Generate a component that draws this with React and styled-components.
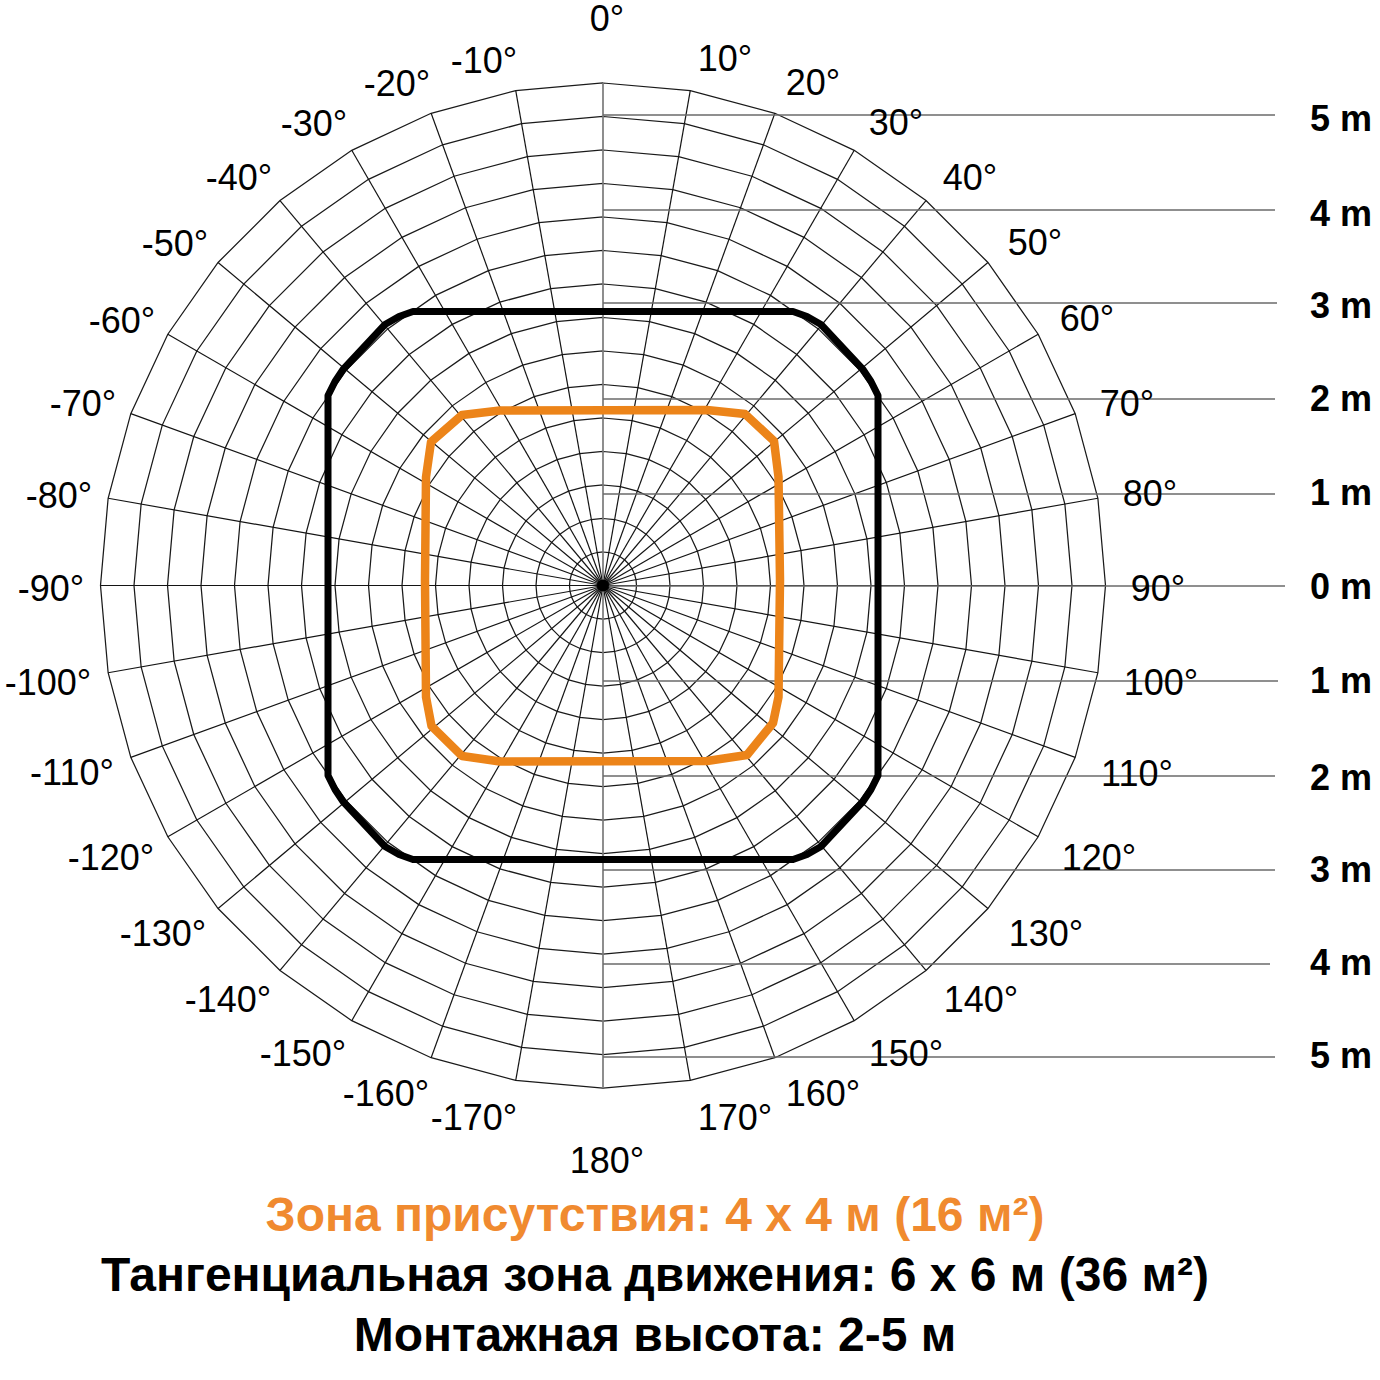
import React from 'react';
import styled, { createGlobalStyle } from 'styled-components';

const GlobalStyle = createGlobalStyle`
  html, body { margin: 0; padding: 0; background: #ffffff; }
  body { font-family: "Liberation Sans", Arial, Helvetica, sans-serif; }
`;

const Page = styled.div`
  width: 1380px;
  display: flex;
  flex-direction: column;
  background: #ffffff;
`;

const Chart = styled.svg`
  display: block;
  width: 1380px;
  height: 1185px;
`;

const DegreeLabel = styled.text`
  font-family: "Liberation Sans", Arial, Helvetica, sans-serif;
  font-size: 36px;
  fill: #000;
`;

const MeterLabel = styled.text`
  font-family: "Liberation Sans", Arial, Helvetica, sans-serif;
  font-size: 36px;
  font-weight: 700;
  fill: #000;
`;

const Caption = styled.div`
  width: 1310px;
  display: flex;
  flex-direction: column;
  align-items: center;
  font-family: "Liberation Sans", Arial, Helvetica, sans-serif;
  font-weight: 700;
  font-size: 48px;
  line-height: 60px;
`;

const CaptionLine = styled.div`
  color: ${(p) => (p.$accent ? '#F08A2F' : '#000000')};
  white-space: nowrap;
`;

const CX = 603;
const CY = 585.5;
const STEP = 33.5;
const RINGS = 15;

const pt = (r, deg) => {
  const a = (deg * Math.PI) / 180;
  return [CX + r * Math.sin(a), CY - r * Math.cos(a)];
};

const ringPoints = (r) => {
  const pts = [];
  for (let d = 0; d < 360; d += 10) {
    const [x, y] = pt(r, d);
    pts.push(`${x.toFixed(2)},${y.toFixed(2)}`);
  }
  return pts.join(' ');
};

const degreeLabels = [
  ['0°', 607, 18],
  ['10°', 725, 58],
  ['20°', 813, 82],
  ['30°', 896, 122],
  ['40°', 970, 177],
  ['50°', 1035, 242],
  ['60°', 1087, 318],
  ['70°', 1127, 403],
  ['80°', 1150, 493],
  ['90°', 1158, 588],
  ['100°', 1161, 682],
  ['110°', 1137, 773],
  ['120°', 1099, 857],
  ['130°', 1046, 933],
  ['140°', 981, 999],
  ['150°', 906, 1053],
  ['160°', 823, 1093],
  ['170°', 735, 1117],
  ['180°', 607, 1160],
  ['-10°', 484, 60],
  ['-20°', 397, 83],
  ['-30°', 314, 123],
  ['-40°', 239, 177],
  ['-50°', 175, 243],
  ['-60°', 122, 320],
  ['-70°', 83, 403],
  ['-80°', 59, 495],
  ['-90°', 51, 588],
  ['-100°', 48, 682],
  ['-110°', 72, 772],
  ['-120°', 111, 857],
  ['-130°', 163, 933],
  ['-140°', 228, 999],
  ['-150°', 303, 1053],
  ['-160°', 386, 1093],
  ['-170°', 474, 1117],
];

const meterRows = [
  ['5 m', 115, 118, 1275],
  ['4 m', 210, 213, 1275],
  ['3 m', 303, 305, 1277],
  ['2 m', 399, 398, 1275],
  ['1 m', 494, 492, 1275],
  ['0 m', 586, 586, 1285],
  ['1 m', 681, 680, 1278],
  ['2 m', 776, 777, 1275],
  ['3 m', 870, 869, 1275],
  ['4 m', 964, 962, 1270],
  ['5 m', 1057, 1055, 1275],
];

const H = 275;
const cornerTR = [
  [190, -274],
  [204, -269],
  [218, -261],
  [260, -216],
  [268, -204],
  [H, -190],
];
const buildBlack = () => {
  const q1 = cornerTR;
  const q2 = cornerTR.map(([x, y]) => [x, -y]).reverse();
  const q3 = cornerTR.map(([x, y]) => [-x, -y]);
  const q4 = cornerTR.map(([x, y]) => [-x, y]).reverse();
  return [...q1, ...q2, ...q3, ...q4]
    .map(([x, y]) => `${CX + x},${CY + y}`)
    .join(' ');
};

const orangePts = [
  [462, 415],
  [500, 410.5],
  [707, 410],
  [745, 414],
  [774, 441],
  [778.5, 477],
  [780, 580],
  [778.5, 697],
  [773, 723],
  [747, 755],
  [707, 761],
  [500, 761.5],
  [462, 756],
  [431.5, 726],
  [426, 697],
  [425, 580],
  [426, 477],
  [431, 442],
]
  .map(([x, y]) => `${x},${y}`)
  .join(' ');

function PolarChart() {
  const rings = [];
  for (let k = 1; k <= RINGS; k++) {
    rings.push(
      <polygon
        key={`r${k}`}
        points={ringPoints(STEP * k)}
        fill="none"
        stroke="#1a1a1a"
        strokeWidth="1.25"
      />
    );
  }
  const radials = [];
  for (let d = 10; d < 360; d += 10) {
    if (d === 180) continue;
    const [x, y] = pt(STEP * RINGS, d);
    radials.push(
      <line key={`a${d}`} x1={CX} y1={CY} x2={x} y2={y} stroke="#141414" strokeWidth="1.2" />
    );
  }
  return (
    <Chart viewBox="0 0 1380 1185" xmlns="http://www.w3.org/2000/svg">
      <rect x="0" y="0" width="1380" height="1185" fill="#fff" />
      {rings}
      {radials}
      <line
        x1={CX}
        y1={CY - STEP * RINGS}
        x2={CX}
        y2={CY + STEP * RINGS}
        stroke="#7a7a7a"
        strokeWidth="1.7"
      />
      {meterRows.map(([, ly, , end], i) => (
        <line key={`h${i}`} x1={CX} y1={ly} x2={end} y2={ly} stroke="#6a6a6a" strokeWidth="1.7" />
      ))}
      <circle cx={CX} cy={CY} r="6" fill="#000" />
      <polygon
        points={buildBlack()}
        fill="none"
        stroke="#000"
        strokeWidth="7"
        strokeLinejoin="round"
      />
      <polygon
        points={orangePts}
        fill="none"
        stroke="#EC8419"
        strokeWidth="8.5"
        strokeLinejoin="round"
      />
      {degreeLabels.map(([t, x, y]) => (
        <DegreeLabel key={t} x={x} y={y + 13} textAnchor="middle">
          {t}
        </DegreeLabel>
      ))}
      {meterRows.map(([t, , ty], i) => (
        <MeterLabel key={`m${i}`} x={1310} y={ty + 13}>
          {t}
        </MeterLabel>
      ))}
    </Chart>
  );
}

export default function App() {
  return (
    <>
      <GlobalStyle />
      <Page>
        <PolarChart />
        <Caption>
          <CaptionLine $accent>Зона присутствия: 4 х 4 м (16 м²)</CaptionLine>
          <CaptionLine>Тангенциальная зона движения: 6 х 6 м (36 м²)</CaptionLine>
          <CaptionLine>Монтажная высота: 2-5 м</CaptionLine>
        </Caption>
      </Page>
    </>
  );
}
